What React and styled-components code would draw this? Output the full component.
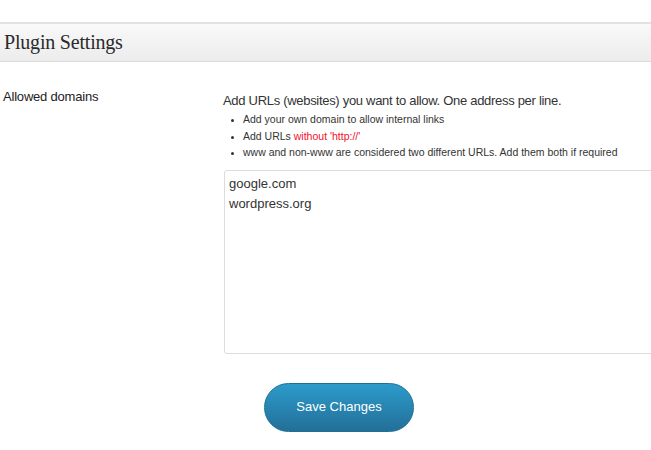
import React, { useState } from "react";
import styled, { createGlobalStyle } from "styled-components";

const GlobalStyle = createGlobalStyle`
  html, body {
    margin: 0;
    padding: 0;
    background: #fff;
    overflow: hidden;
  }
  body {
    font-family: "Liberation Sans", Arial, sans-serif;
    color: #333;
  }
`;

const Page = styled.div`
  width: 651px;
  height: 450px;
  padding-top: 22px;
  box-sizing: border-box;
  overflow: hidden;
`;

const Header = styled.div`
  height: 40px;
  box-sizing: border-box;
  border-top: 2px solid #e2e2e2;
  border-bottom: 1px solid #dcdcdc;
  background: linear-gradient(to bottom, #f9f9f9, #ececec);
  display: flex;
  align-items: center;
  padding-left: 4px;

  h2 {
    margin: 0;
    font-family: "Liberation Serif", Georgia, serif;
    font-weight: normal;
    font-size: 20px;
    letter-spacing: -0.2px;
    color: #2a2a2a;
  }
`;

const Row = styled.div`
  display: grid;
  grid-template-columns: 223px 1fr;
  padding-top: 26px;
`;

const Label = styled.div`
  font-size: 13px;
  line-height: 18px;
  padding-left: 3px;
  letter-spacing: -0.2px;
  color: #222;
`;

const Field = styled.div`
  display: flex;
  flex-direction: column;
  padding-top: 4px;
  min-width: 0;
`;

const Intro = styled.p`
  margin: 0;
  font-size: 13px;
  letter-spacing: -0.3px;
  line-height: 17px;
  color: #333;
`;

const Tips = styled.ul`
  margin: 2px 0 0;
  padding-left: 20px;
  font-size: 10.5px;
  line-height: 16.5px;
  color: #333;

  li::marker {
    font-size: 9px;
  }
`;

const Red = styled.span`
  color: #f0102a;
`;

const Box = styled.textarea`
  margin-top: 9px;
  margin-left: 1px;
  width: 440px;
  height: 184px;
  box-sizing: border-box;
  border: 1px solid #dcdcdc;
  border-radius: 3px;
  padding: 3px 4px;
  font-family: "Liberation Sans", Arial, sans-serif;
  font-size: 13px;
  line-height: 20px;
  color: #333;
  resize: none;
  outline: none;
`;

const SaveButton = styled.button`
  margin: 29px 0 0 41px;
  width: 150px;
  height: 49px;
  border-radius: 25px;
  border: 1px solid #1f6f95;
  background: linear-gradient(to bottom, #2c9bcb, #236f98);
  color: #fff;
  font-family: "Liberation Sans", Arial, sans-serif;
  font-size: 13px;
  padding-bottom: 2px;
  cursor: pointer;
  align-self: flex-start;
`;

export default function App() {
  const [domains, setDomains] = useState("google.com\nwordpress.org");

  return (
    <Page>
      <GlobalStyle />
      <Header>
        <h2>Plugin Settings</h2>
      </Header>
      <Row>
        <Label>Allowed domains</Label>
        <Field>
          <Intro>Add URLs (websites) you want to allow. One address per line.</Intro>
          <Tips>
            <li>Add your own domain to allow internal links</li>
            <li>
              Add URLs <Red>without 'http://'</Red>
            </li>
            <li>www and non-www are considered two different URLs. Add them both if required</li>
          </Tips>
          <Box value={domains} onChange={(e) => setDomains(e.target.value)} />
          <SaveButton>Save Changes</SaveButton>
        </Field>
      </Row>
    </Page>
  );
}
